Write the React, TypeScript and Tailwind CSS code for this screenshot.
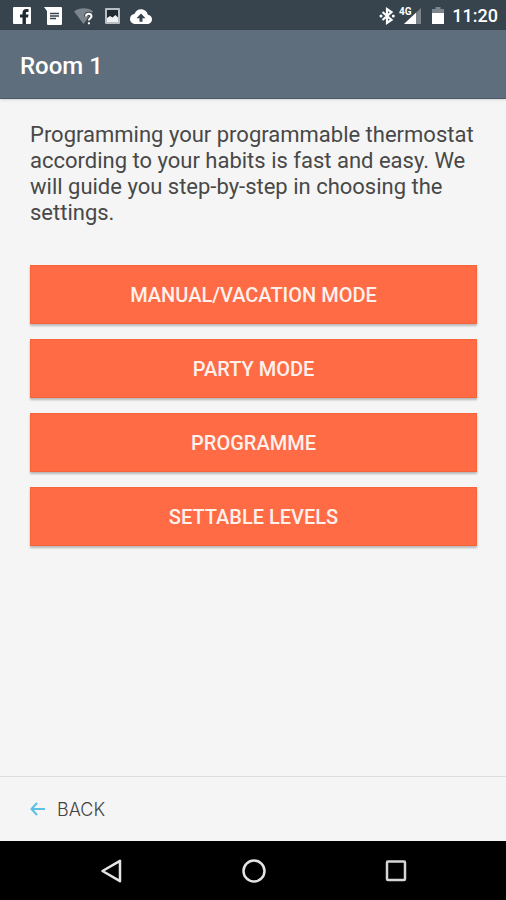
import React from "react";

const modes = ["Manual/Vacation mode", "Party mode", "Programme", "Settable levels"];

const StatusBar: React.FC = () => (
	<div className="flex h-[30px] items-center justify-between bg-[#37434d] pl-3 pr-2 pt-px text-white">
		<div className="flex items-center gap-[11px]">
			<svg className="h-5 w-5" viewBox="0 0 20 20" aria-hidden="true">
				<rect x="1" y="1" width="18" height="17" rx="1" fill="#fff" />
				<path
					d="M10.500 18v-6.500h-2.500V8.500h2.500V7c0-2.600 1.500-4 4-4h2v3h-1.500c-.8 0-1.100.4-1.100 1.200v1.300h2.600l-.5 3h-2.100v6.500z"
					fill="#1f2a33"
				/>
			</svg>
			<svg className="h-5 w-5" viewBox="0 0 20 20" aria-hidden="true">
				<path d="M1 1h17a1 1 0 0 1 1 1v16a1 1 0 0 1-1 1H5a1 1 0 0 1-1-1V5z" fill="#fff" />
				<path d="M7 7.500h9M7 10h9M7 12.500h6" stroke="#37434d" strokeWidth="1.600" />
			</svg>
			<svg className="h-5 w-5" viewBox="0 0 20 20" aria-hidden="true">
				<path d="M0 5.500C5.500 1.200 14.500 1.200 19 5.500L9.500 18z" fill="#7c858c" />
				<path
					d="M12 10.500c0-3.500 5.500-3.500 5.500-.3 0 2-2.600 2.200-2.600 4.300M14.900 16.300v2"
					fill="none"
					stroke="#37434d"
					strokeWidth="4"
				/>
				<path
					d="M12 10.500c0-3.500 5.500-3.500 5.500-.3 0 2-2.600 2.200-2.600 4.300M14.900 16.300v2"
					fill="none"
					stroke="#fff"
					strokeWidth="2"
				/>
			</svg>
			<svg className="mr-[-2px] h-5 w-4" viewBox="0 0 16 20" aria-hidden="true">
				<rect x="0" y="2" width="15" height="16" rx="1" fill="#b9bec2" />
				<rect x="2" y="4" width="11" height="10" fill="#1f2a33" />
				<path d="M2 12l3-2 2.500 1.500L10.500 9l2.500 2.500V16H2z" fill="#f0f1f2" />
			</svg>
			<svg className="h-5 w-[22px]" viewBox="0 0 22 20" aria-hidden="true">
				<path
					d="M5.500 18C2.300 18 0 15.800 0 13c0-2.600 1.900-4.600 4.300-4.900C5.500 5.200 8 3.200 11 3.200c3.500 0 6.200 2.400 6.900 5.600 2.300.2 4.100 2 4.100 4.400 0 2.700-2.100 4.800-4.900 4.800z"
					fill="#fff"
				/>
				<path d="M11 7.500l4.500 4.700h-3v3.600h-3v-3.600h-3z" fill="#37434d" />
			</svg>
		</div>
		<div className="flex items-center">
			<svg className="mr-1 h-5 w-4" viewBox="0 0 16 20" aria-hidden="true">
				<path d="M3.500 6l9 8L8 17V3l4.500 3-9 8" fill="none" stroke="#fff" strokeWidth="2.200" />
				<circle cx="2" cy="10" r="1.500" fill="#fff" />
				<circle cx="14.300" cy="10" r="1.500" fill="#fff" />
			</svg>
			<svg className="mr-[9px] h-5 w-[22px]" viewBox="0 0 22 20" aria-hidden="true">
				<path d="M5 18L22 2v16z" fill="#7c858c" />
				<path d="M5 18L17 6.700V18z" fill="#fff" />
				<text
					x="0"
					y="9"
					fill="#fff"
					stroke="#37434d"
					strokeWidth="2"
					paintOrder="stroke"
					className="font-['Roboto',sans-serif] text-[10px] font-bold"
				>
					4G
				</text>
			</svg>
			<svg className="mr-[6px] h-5 w-4" viewBox="0 0 16 20" aria-hidden="true">
				<path d="M2 3h3.500V1h5v2H14v5H2z" fill="#7c858c" />
				<path d="M2 7h12v11H2z" fill="#fff" />
			</svg>
			<time className="text-[18px] font-medium leading-5">11:20</time>
		</div>
	</div>
);

const NavBar: React.FC = () => (
	<nav className="flex h-[59px] items-center justify-center gap-[118px] bg-black pl-px">
		<button type="button" aria-label="System back">
			<svg className="h-6 w-6" viewBox="0 0 24 24" fill="none" stroke="#e4e4e4" strokeWidth="2.500">
				<path d="M20 1.800v20.400L2.500 12z" strokeLinejoin="round" />
			</svg>
		</button>
		<button type="button" aria-label="Home">
			<svg className="h-6 w-6" viewBox="0 0 24 24" fill="none" stroke="#e4e4e4" strokeWidth="2.500">
				<circle cx="12" cy="12" r="10.500" />
			</svg>
		</button>
		<button type="button" aria-label="Recent apps">
			<svg className="h-6 w-6" viewBox="0 0 24 24" fill="none" stroke="#d6d6d6" strokeWidth="2.500">
				<rect x="3" y="2.500" width="18" height="18.500" rx="1" />
			</svg>
		</button>
	</nav>
);

const App: React.FC = () => {
	return (
		<div className="flex min-h-screen flex-col bg-[#f5f5f5] font-['Roboto',sans-serif]">
			<StatusBar />
			<header className="flex h-[69px] items-center border-b border-[#4c5966] bg-[#5f6e7d] px-5 pt-1 shadow-sm">
				<h1 className="text-2xl font-medium text-white">Room 1</h1>
			</header>

			<main className="flex flex-1 flex-col pl-[30px] pr-[29px] pt-[23px]">
				<p className="text-[22px] leading-[26px] text-[#484848]">
					Programming your programmable thermostat according to your habits is fast and easy. We will
					guide you step-by-step in choosing the settings.
				</p>
				<div className="mt-[39px] flex flex-col gap-[15px]">
					{modes.map((mode) => (
						<button
							key={mode}
							type="button"
							className="h-[59px] border border-[#f8643a] bg-[#ff6b45] text-xl font-medium uppercase text-[#fff1ec] shadow-[0_2px_2px_rgba(0,0,0,0.25)]"
						>
							{mode}
						</button>
					))}
				</div>
			</main>

			<footer className="flex h-[65px] items-center border-t border-[#dcdcdc] px-[30px]">
				<button
					type="button"
					className="flex items-center gap-[11px] font-['Inter',sans-serif] text-[18px] font-light text-[#444]"
				>
					<svg className="h-4 w-4" viewBox="0 0 16 16" fill="none" stroke="#5bc0e6" strokeWidth="2">
						<path d="M15 8H1.500M7 2L1.500 8 7 14" />
					</svg>
					BACK
				</button>
			</footer>
			<NavBar />
		</div>
	);
};

export default App;
